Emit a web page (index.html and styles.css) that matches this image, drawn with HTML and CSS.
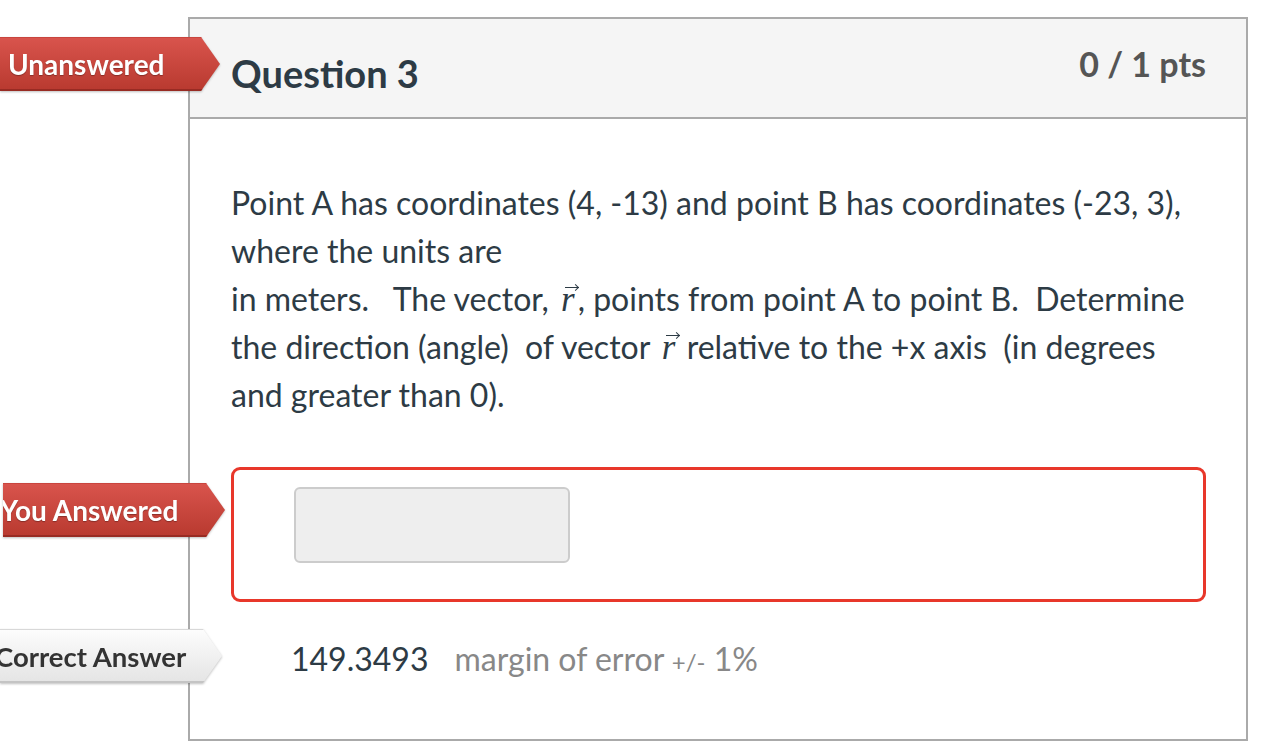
FILE: index.html
```html
<!DOCTYPE html>
<html lang="en">

<head>
    <meta charset="UTF-8">
    <meta name="viewport" content="width=device-width, initial-scale=1.0">
    <title>Question 3</title>
    <link rel="stylesheet" href="styles.css">
</head>

<body>
    <div class="question">
        <div class="header">
            <span class="flag flag-red flag-unanswered"><span class="flag-shape">Unanswered</span></span>
            <h2>Question 3</h2>
            <span class="pts">0 / 1 pts</span>
        </div>

        <div class="content">
            <p class="text">
                Point A has coordinates (4, -13) and point B has coordinates (-23, 3),<br>
                where the units are<br>
                in meters. &nbsp; The vector, <span class="vec">r</span>, points from point A to point B. &nbsp;Determine<br>
                the direction (angle) &nbsp;of vector <span class="vec">r</span> relative to the +x axis &nbsp;(in degrees<br>
                and greater than 0).
            </p>

            <div class="answer answer-wrong">
                <span class="flag flag-red flag-you"><span class="flag-shape">You Answered</span></span>
                <input type="text" class="answer-input" readonly>
            </div>

            <div class="answer answer-correct">
                <span class="flag flag-gray flag-correct"><span class="flag-shape">Correct Answer</span></span>
                <span class="value">149.3493</span>
                <span class="margin">margin of error <small>+/-</small> 1%</span>
            </div>
        </div>
    </div>
</body>

</html>
```

FILE: styles.css
```css
/* General */
body {
    margin: 0;
    padding: 17px 0 0 188px;
    font-family: 'Lato', 'Noto Sans', sans-serif;
    background-color: #fff;
    color: #2d3b45;
}

.question {
    width: 1056px;
    height: 720px;
    border: 2px solid #aaa;
}

/* Header */
.header {
    position: relative;
    display: flex;
    justify-content: space-between;
    align-items: flex-start;
    height: 98px;
    padding: 0 40px 0 41px;
    background-color: #f5f5f5;
    border-bottom: 2px solid #aaa;
}

.header h2 {
    margin: 31px 0 0;
    font-size: 38px;
    font-weight: 700;
    line-height: 46px;
    color: #2d3b45;
}

.pts {
    margin-top: 25px;
    font-size: 34px;
    font-weight: 700;
    line-height: 40px;
    color: #555;
}

/* Flags */
.flag {
    position: absolute;
    width: 222px;
    height: 54px;
    filter: drop-shadow(0 1px 1px rgba(0, 0, 0, 0.25));
}

.flag-shape {
    display: flex;
    align-items: center;
    box-sizing: border-box;
    height: 100%;
    font-size: 28px;
    font-weight: 700;
    white-space: nowrap;
    clip-path: polygon(0 0, calc(100% - 19px) 0, 100% 50%, calc(100% - 19px) 100%, 0 100%);
}

.flag-red .flag-shape {
    color: #fff;
    background: linear-gradient(#d9544d, #b8392f);
    box-shadow: inset 0 -2px 0 #982b23, inset 0 1px 0 #c9453e;
    text-shadow: 0 1px 1px rgba(0, 0, 0, 0.3);
}

.flag-gray .flag-shape {
    color: #333;
    background: linear-gradient(#fdfdfd, #e4e4e4);
    box-shadow: inset 0 -2px 0 #c4c4c4, inset 0 1px 0 #d8d8d8;
}

.flag-unanswered {
    top: 18px;
    right: calc(100% - 30px);
    width: 220px;
}

.flag-unanswered .flag-shape {
    padding-left: 8px;
}

.flag-you {
    top: 13px;
    right: calc(100% + 9px);
}

.flag-you .flag-shape {
    text-indent: -3px;
}

.flag-correct {
    top: 0;
    right: calc(100% + 9px);
}

.flag-correct .flag-shape {
    text-indent: -5px;
    font-size: 27.5px;
}

/* Question text */
.content {
    padding: 60px 40px 0 41px;
}

.text {
    margin: 0;
    font-size: 32px;
    line-height: 48px;
}

.vec {
    position: relative;
    display: inline-block;
    font-family: 'Liberation Serif', serif;
    font-style: italic;
    font-size: 35px;
    line-height: 1;
    padding: 0 3px 0 4px;
}

/* arrow over the vector: shaft + head */
.vec::before {
    content: '';
    position: absolute;
    left: 8px;
    top: 5px;
    width: 14px;
    border-top: 1.5px solid currentColor;
}

.vec::after {
    content: '';
    position: absolute;
    left: 16px;
    top: 2.5px;
    width: 4px;
    height: 4px;
    border-top: 1.5px solid currentColor;
    border-right: 1.5px solid currentColor;
    transform: rotate(45deg);
}

/* Answers */
.answer {
    position: relative;
}

.answer-wrong {
    box-sizing: border-box;
    height: 135px;
    margin-top: 48px;
    padding: 17px 0 0 60px;
    border: 3px solid #e8372a;
    border-radius: 9px;
}

.answer-input {
    box-sizing: border-box;
    width: 276px;
    height: 76px;
    background-color: #eee;
    border: 2px solid #ccc;
    border-radius: 6px;
    outline: none;
}

.answer-correct {
    display: flex;
    align-items: center;
    box-sizing: border-box;
    height: 54px;
    margin-top: 27px;
    padding: 4px 0 0 60px;
    font-size: 32px;
}

.value {
    margin-right: 26px;
}

.margin {
    color: #888;
}

.margin small {
    font-size: 24px;
}
```
